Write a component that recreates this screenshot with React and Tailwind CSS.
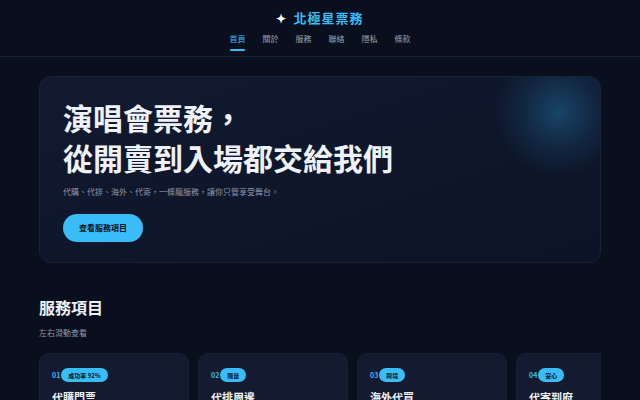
import React from 'react';

const nav = ['首頁', '關於', '服務', '聯絡', '隱私', '條款'];

const services = [
  { no: '01', tag: '成功率 92%', title: '代購門票' },
  { no: '02', tag: '限量', title: '代排周邊' },
  { no: '03', tag: '跨境', title: '海外代買' },
  { no: '04', tag: '安心', title: '代寄到府' },
];

export default function App() {
  return (
    <div
      className="w-[640px] h-[400px] overflow-hidden bg-[#0a0f1d] text-white"
      style={{ fontFamily: '"Noto Sans CJK TC", "Noto Sans", sans-serif' }}
    >
      <header className="h-[57px] border-b border-[#1a2236] flex flex-col items-center">
        <div className="mt-[8px] flex items-center gap-[6px] text-[13px] font-bold tracking-[1px] text-[#38bdf8] leading-[20px]">
          <span className="text-white text-[12px]">✦</span>
          <span>北極星票務</span>
        </div>
        <nav className="mt-[5px] flex gap-[17px] text-[8px] leading-[12px]">
          {nav.map((n, i) => (
            <div key={n} className="flex flex-col items-center">
              <span className={i === 0 ? 'text-[#38bdf8]' : 'text-[#94a3b8]'}>{n}</span>
              {i === 0 && <span className="mt-[4px] w-[15px] h-[2px] rounded-full bg-[#38bdf8]" />}
            </div>
          ))}
        </nav>
      </header>

      <main className="px-[39px]">
        <section className="relative mt-[19px] h-[187px] rounded-[12px] border border-[#1a2237] bg-gradient-to-br from-[#111a30] to-[#0d1326] overflow-hidden pl-[23px] pt-[20px]">
          <div className="absolute right-[-24px] top-[-30px] w-[130px] h-[130px] rounded-full bg-[radial-gradient(circle,rgba(30,100,145,0.6)_0%,rgba(25,75,115,0.3)_40%,rgba(15,25,50,0)_70%)]" />
          <h1 className="relative text-[30px] font-bold leading-[40px] text-[#eef2f8]">
            演唱會票務，
            <br />
            從開賣到入場都交給我們
          </h1>
          <p className="relative mt-[9px] text-[8px] leading-[12px] text-[#8b96aa]">
            代購、代排、海外、代寄，一條龍服務，讓你只管享受舞台。
          </p>
          <button className="relative mt-[16px] h-[28px] px-[16px] rounded-full bg-[#38bdf8] text-[#0b1222] text-[8px] font-bold">
            查看服務項目
          </button>
        </section>

        <section className="mt-[33px]">
          <h2 className="text-[16px] font-bold leading-[22px] text-[#eef2f8]">服務項目</h2>
          <p className="mt-[9px] text-[8px] leading-[12px] text-[#8b96aa]">左右滑動查看</p>
          <div className="mt-[14px] flex gap-[9px] overflow-hidden">
            {services.map((s) => (
              <div
                key={s.no}
                className="shrink-0 w-[150px] h-[80px] rounded-[10px] bg-[#141b30] border border-[#182036] px-[12px] pt-[14px]"
              >
                <div className="flex items-center gap-[1px]">
                  <span className="text-[7px] font-bold text-[#38bdf8]">{s.no}</span>
                  <span className="h-[14px] px-[7px] rounded-full bg-[#38bdf8] text-[#0b1222] text-[6px] font-bold flex items-center">
                    {s.tag}
                  </span>
                </div>
                <div className="mt-[7px] text-[11px] font-bold text-[#eef2f8]">{s.title}</div>
              </div>
            ))}
          </div>
        </section>
      </main>
    </div>
  );
}
